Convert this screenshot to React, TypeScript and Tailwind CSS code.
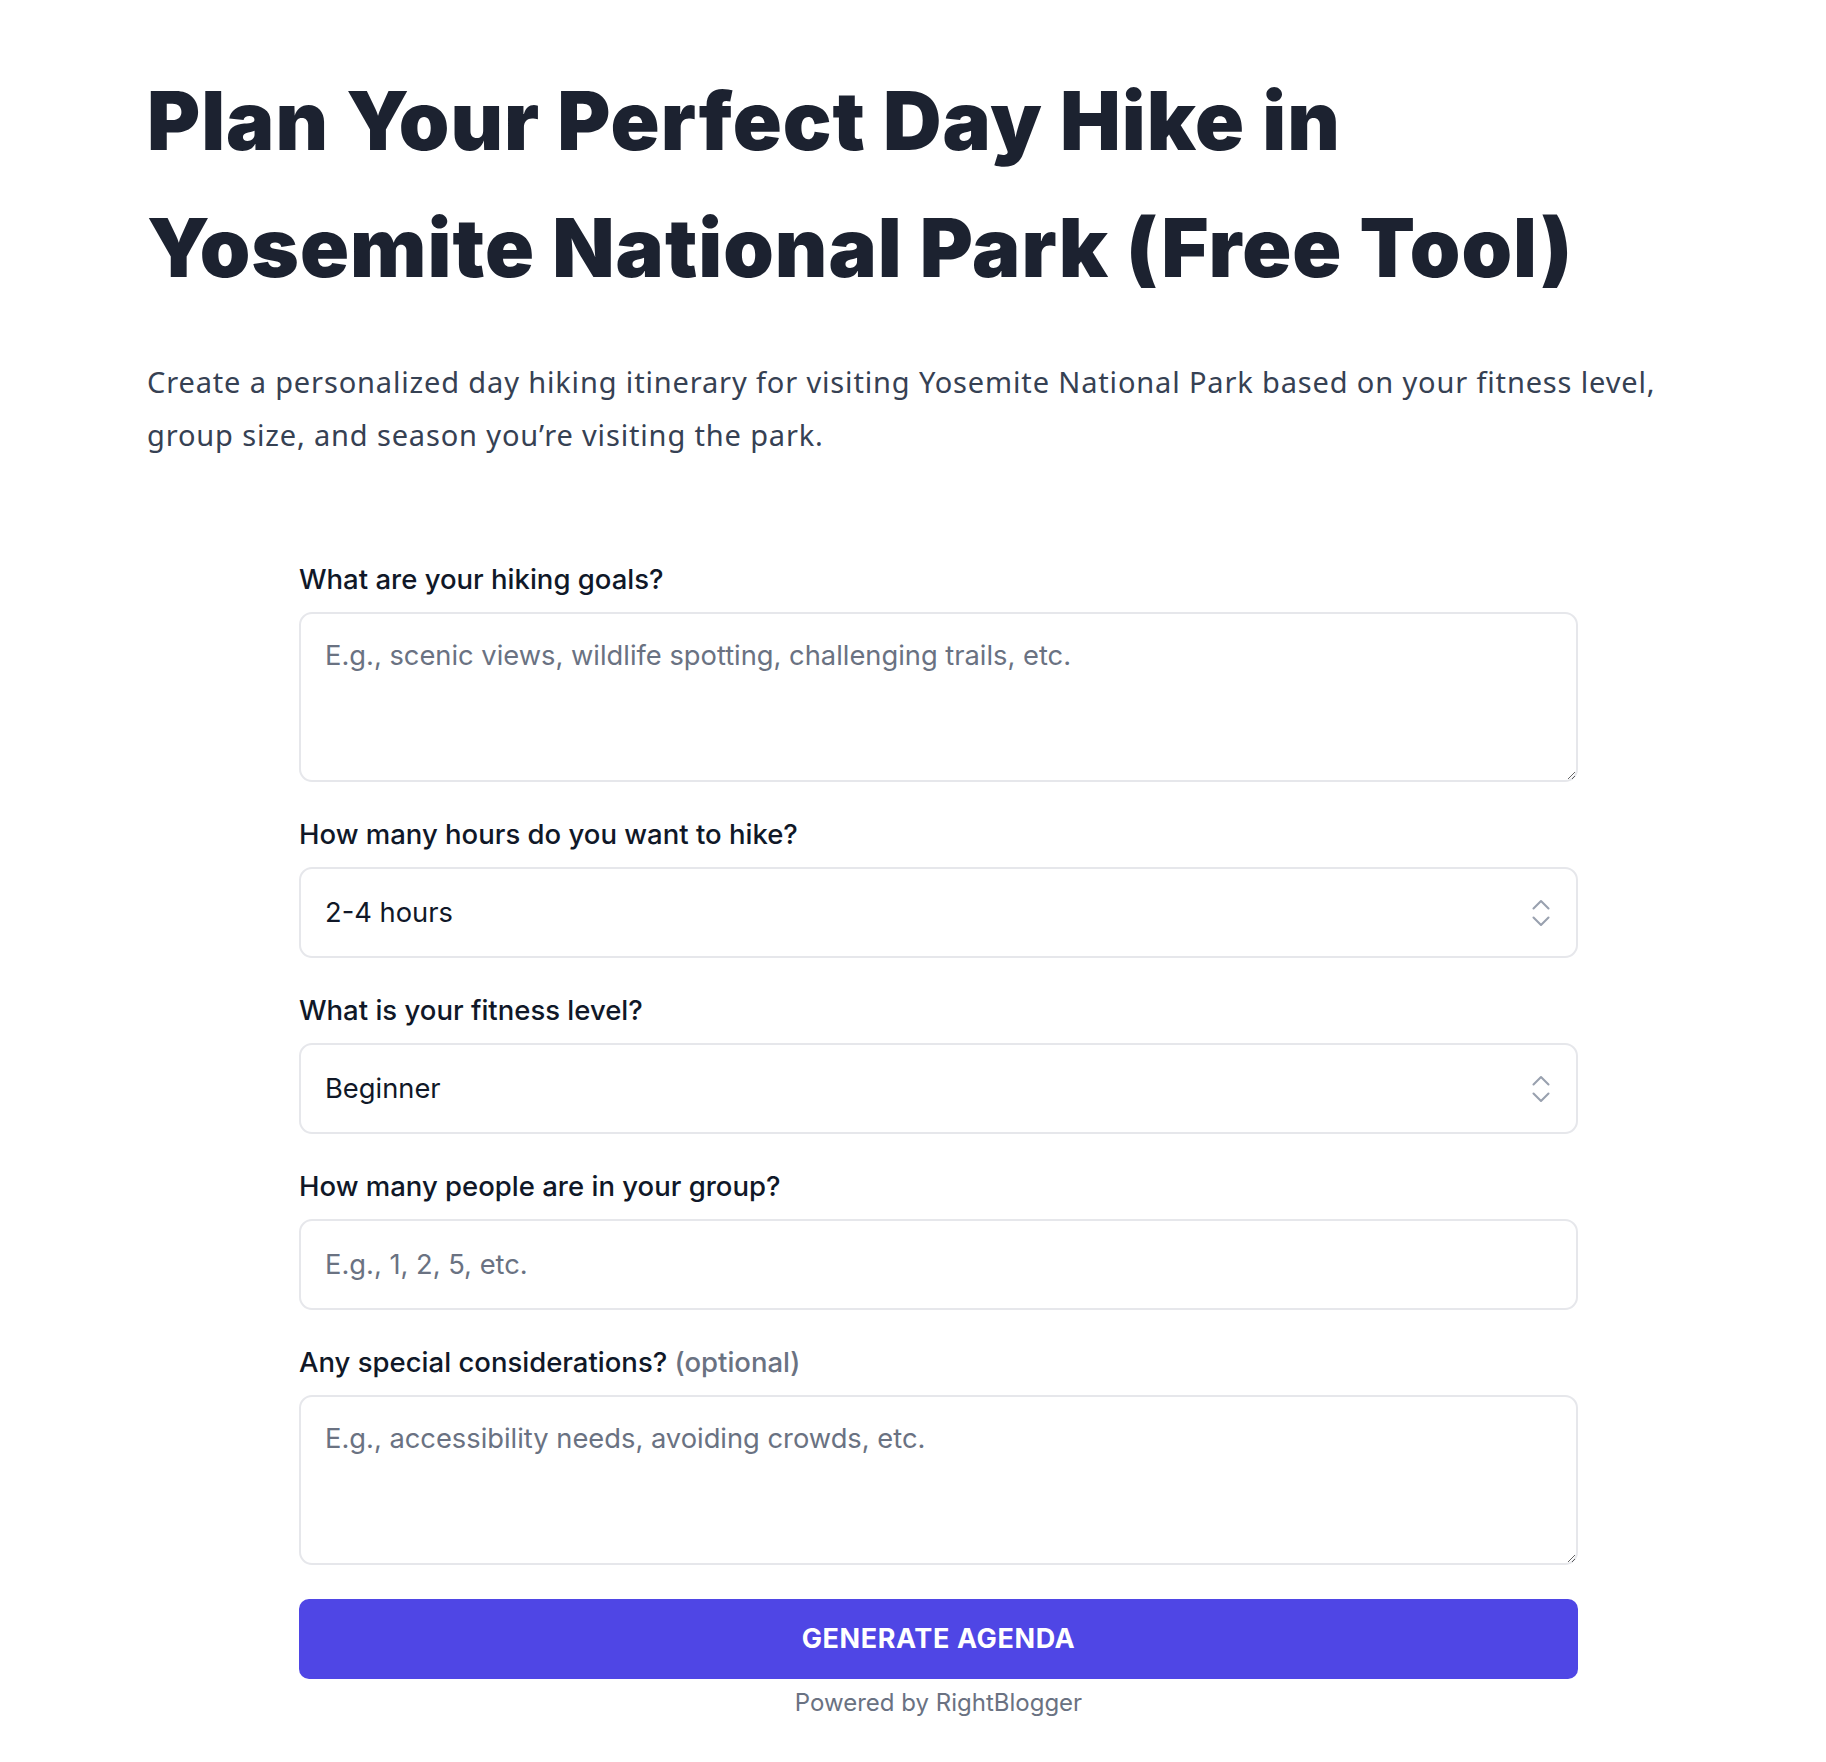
import { ChevronsUpDown } from "lucide-react";

const inter = "font-['Inter','Liberation_Sans',sans-serif]";

function Label({ children, optional }: { children: React.ReactNode; optional?: boolean }) {
  return (
    <label className="mb-[13px] block text-[27.5px] font-medium leading-[39px] text-gray-900">
      {children}
      {optional ? <span className="text-gray-500"> (optional)</span> : null}
    </label>
  );
}

const boxClass =
  "block w-full rounded-[13px] border-2 border-[#e6e7eb] bg-white px-6 text-[27.3px] leading-[39px] text-gray-900 placeholder:text-gray-500 outline-none";

function SelectField({ value, options }: { value: string; options: string[] }) {
  return (
    <div className="relative">
      <select defaultValue={value} className={`${boxClass} h-[91px] appearance-none`}>
        {options.map((o) => (
          <option key={o}>{o}</option>
        ))}
      </select>
      <ChevronsUpDown
        size={36}
        strokeWidth={1.4}
        className="pointer-events-none absolute right-[19px] top-1/2 -translate-y-1/2 text-gray-400"
      />
    </div>
  );
}

export default function App() {
  return (
    <div className="min-h-screen bg-white">
      <div className="mx-auto w-[1532px] pt-[58px] pb-[40px]">
        <h1 className="font-['Inter','Liberation_Sans',sans-serif] text-[81px] font-black leading-[127px] tracking-[1px] text-[#1c2230]">
          Plan Your Perfect Day Hike in Yosemite National Park (Free Tool)
        </h1>

        <p className="mt-[43px] font-['Noto_Sans','Open_Sans',sans-serif] text-[29px] leading-[53px] tracking-[0.85px] text-gray-700">
          Create a personalized day hiking itinerary for visiting Yosemite National Park based on your fitness level,
          group size, and season you’re visiting the park.
        </p>

        <form className={`${inter} ml-[152px] mt-[99px] flex w-[1279px] flex-col`} onSubmit={(e) => e.preventDefault()}>
          <div className="flex flex-col gap-[33px]">
            <div>
              <Label>What are your hiking goals?</Label>
              <textarea
                className={`${boxClass} h-[170px] py-[22px]`}
                placeholder="E.g., scenic views, wildlife spotting, challenging trails, etc."
              />
            </div>

            <div>
              <Label>How many hours do you want to hike?</Label>
              <SelectField value="2-4 hours" options={["1-2 hours", "2-4 hours", "4-6 hours", "6+ hours"]} />
            </div>

            <div>
              <Label>What is your fitness level?</Label>
              <SelectField value="Beginner" options={["Beginner", "Intermediate", "Advanced"]} />
            </div>

            <div>
              <Label>How many people are in your group?</Label>
              <input type="text" className={`${boxClass} h-[91px]`} placeholder="E.g., 1, 2, 5, etc." />
            </div>

            <div>
              <Label optional>Any special considerations?</Label>
              <textarea
                className={`${boxClass} h-[170px] py-[22px]`}
                placeholder="E.g., accessibility needs, avoiding crowds, etc."
              />
            </div>
          </div>

          <button
            type="submit"
            className="mt-[34px] h-[80px] w-full rounded-[10px] bg-[#4f46e5] text-[27px] font-bold uppercase tracking-[0.6px] text-white"
          >
            Generate Agenda
          </button>
          <div className="mt-[7px] text-center text-[24px] leading-[34px] text-gray-500">Powered by RightBlogger</div>
        </form>
      </div>
    </div>
  );
}
